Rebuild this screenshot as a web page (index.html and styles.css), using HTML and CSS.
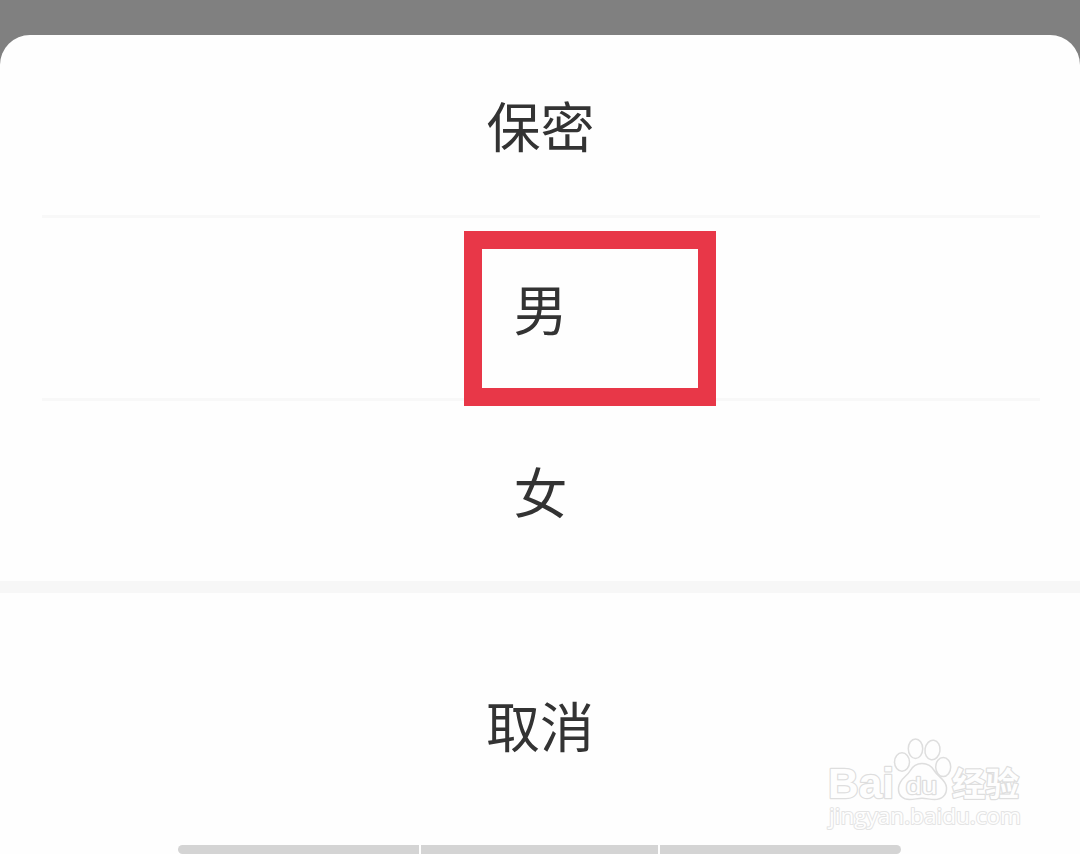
FILE: index.html
```html
<!DOCTYPE html>
<html lang="zh-CN">
<head>
    <meta charset="UTF-8">
    <title>选择性别</title>
    <link rel="stylesheet" href="styles.css">
</head>
<body>
    <div class="sheet">
        <div class="option">保密</div>
        <div class="option">男<span class="highlight"></span></div>
        <div class="option">女</div>
        <div class="gap"></div>
        <div class="cancel">取消</div>
        <div class="nav-bar">
            <span></span>
            <span></span>
            <span></span>
        </div>
    </div>

    <svg class="watermark" width="210" height="104" viewBox="820 730 210 104">
        <g class="logo">
            <text class="latin" x="828" y="798" font-size="43" textLength="66" lengthAdjust="spacingAndGlyphs">Bai</text>
            <ellipse cx="902" cy="762" rx="7.5" ry="9.2"/>
            <ellipse cx="915.5" cy="748.7" rx="7.2" ry="9.8"/>
            <ellipse cx="932.5" cy="750" rx="7.5" ry="9.8" transform="rotate(8 932.5 750)"/>
            <ellipse cx="943.2" cy="767" rx="7.5" ry="9.5"/>
            <path d="M922 763.500c-6 0-9.500 3-12 7.500-3 5.500-11 8-11.500 17-.5 8 5 11.500 11 11.500 5 0 8-1.200 12.500-1.200s7.500 1.200 12.500 1.200c7 0 12.500-4 12-12-.5-8-8.500-10.500-12-16.500-2.500-4.500-6.500-7.500-12.500-7.500z"/>
            <text class="du" x="906" y="793.5" font-size="24" textLength="31" lengthAdjust="spacingAndGlyphs">du</text>
            <text class="cjk" x="952" y="796" font-size="33" textLength="67" lengthAdjust="spacingAndGlyphs">经验</text>
        </g>
        <text class="url" x="829" y="824" font-size="22" textLength="192" lengthAdjust="spacingAndGlyphs">jingyan.baidu.com</text>
    </svg>
</body>
</html>
```
FILE: styles.css
```css
body {
    margin: 0;
    height: 854px;
    padding-top: 35px;
    box-sizing: border-box;
    overflow: hidden;
    background-color: #808080;
    color: #333;
    font-family: "Noto Sans CJK SC", sans-serif;
}
.sheet {
    display: flex;
    flex-direction: column;
    height: 819px;
    background-color: #fefefe;
    border-radius: 30px 30px 0 0;
}
.option {
    position: relative;
    display: flex;
    justify-content: center;
    align-items: center;
    height: 180px;
    padding-right: 1px;
    box-sizing: border-box;
    margin: 0 40px 0 42px;
    font-size: 54px;
    line-height: 1;
}
.option:nth-child(-n+2) {
    height: 183px;
    border-bottom: 3px solid #f8f8f8;
}
/* red frame around the chosen option */
.highlight {
    position: absolute;
    left: 421.7px;
    top: 13px;
    width: 252.3px;
    height: 175px;
    box-sizing: border-box;
    border: 18px solid #e83748;
}
.gap {
    height: 12px;
    background-color: #f7f7f7;
}
.cancel {
    display: flex;
    flex: 1;
    justify-content: center;
    align-items: center;
    padding-top: 11px;
    font-size: 54px;
    line-height: 1;
}
.nav-bar {
    display: flex;
    gap: 2px;
    width: 723px;
    height: 9px;
    margin-left: 178px;
    border-radius: 5px;
    overflow: hidden;
}
.nav-bar span {
    width: 241px;
    background-color: #d4d4d4;
}
.nav-bar span:nth-child(2) {
    width: 237px;
}
.watermark {
    position: absolute;
    left: 820px;
    top: 730px;
}
.watermark text,
.logo ellipse,
.logo path {
    fill: #fefefe;
    stroke: #dedede;
    stroke-width: 1.5px;
}
.watermark text {
    stroke-width: 2.5px;
    stroke-linejoin: round;
    paint-order: stroke;
}
.watermark .latin {
    font-family: "Liberation Sans", sans-serif;
    font-weight: bold;
}
.watermark .du {
    font-family: "Liberation Sans", sans-serif;
}
.watermark .cjk {
    font-family: "Noto Sans CJK SC", sans-serif;
    font-weight: bold;
}
.watermark .url {
    font-family: "Open Sans", sans-serif;
    stroke: #e4e4e4;
    stroke-width: 2px;
}
```
